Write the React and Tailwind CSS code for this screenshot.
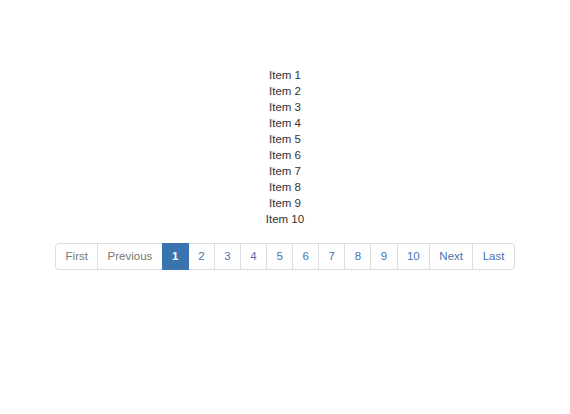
import React from "react";

const items = Array.from({ length: 10 }, (_, i) => `Item ${i + 1}`);
const pages = Array.from({ length: 10 }, (_, i) => i + 1);

export default function App() {
  return (
    <div className="w-[570px] h-[414px] bg-white flex flex-col items-center pt-[67px] text-[11.5px] text-[#333333] [font-family:'Liberation_Sans',Arial,sans-serif]">
      <div className="flex flex-col items-center leading-[16px]">
        {items.map((t) => (
          <div key={t}>{t}</div>
        ))}
      </div>
      <ul className="flex mt-[16px] leading-[15px]">
        <li>
          <span className="block px-[9.35px] py-[5px] border border-[#dddddd] rounded-l-[4px] text-[#777777] bg-white">First</span>
        </li>
        <li>
          <span className="block -ml-px px-[9.35px] py-[5px] border border-[#dddddd] text-[#777777] bg-white">Previous</span>
        </li>
        {pages.map((p) =>
          p === 1 ? (
            <li key={p} className="relative z-10">
              <span className="block -ml-px px-[9.35px] py-[5px] border border-[#3a74ae] bg-[#3a74ae] text-white font-bold">{p}</span>
            </li>
          ) : (
            <li key={p}>
              <span className="block -ml-px px-[9.35px] py-[5px] border border-[#dddddd] text-[#4573b2] bg-white">{p}</span>
            </li>
          )
        )}
        <li>
          <span className="block -ml-px px-[9.35px] py-[5px] border border-[#dddddd] text-[#4573b2] bg-white">Next</span>
        </li>
        <li>
          <span className="block -ml-px px-[9.35px] py-[5px] border border-[#dddddd] rounded-r-[4px] text-[#4573b2] bg-white">Last</span>
        </li>
      </ul>
    </div>
  );
}
